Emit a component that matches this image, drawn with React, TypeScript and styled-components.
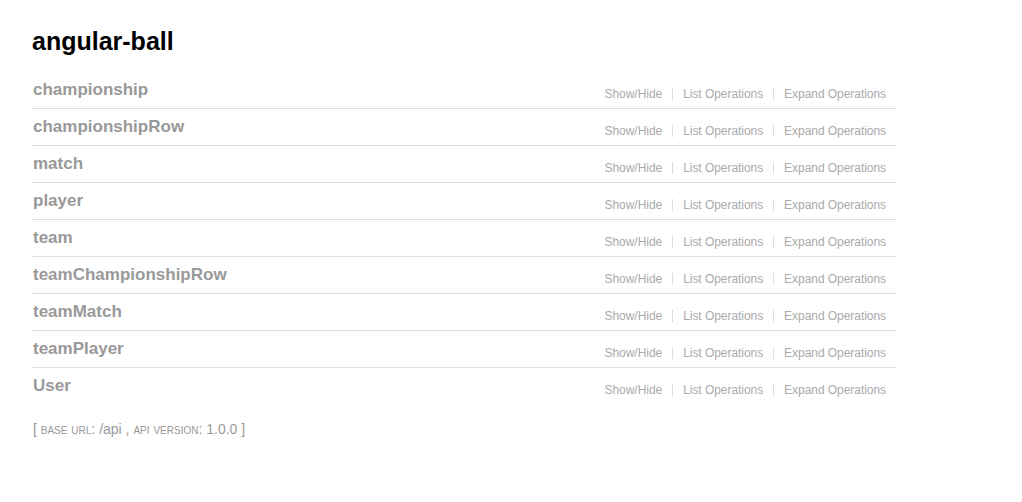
import React from "react";
import styled, { createGlobalStyle } from "styled-components";

const Global = createGlobalStyle`
  html, body { margin: 0; padding: 0; background: #fff; }
  body { font-family: "Liberation Sans", Arial, sans-serif; }
`;

const Container = styled.div`
  width: 864px;
  padding: 27px 32px 40px;
`;

const Title = styled.h1`
  margin: 0 0 16px;
  font-size: 25px;
  line-height: 29px;
  font-weight: bold;
  color: #000;
`;

const ResourceList = styled.ul`
  list-style: none;
  margin: 0;
  padding: 0;
`;

const Resource = styled.li<{ $last?: boolean }>`
  display: flex;
  justify-content: space-between;
  align-items: flex-start;
  height: 36px;
  border-bottom: ${(p) => (p.$last ? "none" : "1px solid #ddd")};
`;

const Heading = styled.h2`
  margin: 0;
  padding: 8px 0 0 1px;
  font-size: 17px;
  line-height: 20px;
  font-weight: bold;
  color: #999;
`;

const Options = styled.ul`
  list-style: none;
  display: flex;
  margin: 16px 0 0;
  padding: 0;
`;

const Option = styled.li<{ $last?: boolean }>`
  padding: 0 10px;
  font-size: 12px;
  line-height: 12px;
  height: 12px;
  letter-spacing: -0.05px;
  color: #aaa;
  border-right: ${(p) => (p.$last ? "none" : "1px solid #ddd")};
  cursor: pointer;
`;

const Footer = styled.h4`
  margin: 16px 0 0;
  padding-left: 1px;
  font-size: 14px;
  line-height: 18px;
  font-weight: normal;
  color: #999;
`;

const Label = styled.span`
  font-variant: small-caps;
`;

const resources = [
  "championship",
  "championshipRow",
  "match",
  "player",
  "team",
  "teamChampionshipRow",
  "teamMatch",
  "teamPlayer",
  "User",
];

export default function App() {
  return (
    <>
      <Global />
      <Container>
        <Title>angular-ball</Title>
        <ResourceList>
          {resources.map((r, i) => (
            <Resource key={r} $last={i === resources.length - 1}>
              <Heading>{r}</Heading>
              <Options>
                <Option>Show/Hide</Option>
                <Option>List Operations</Option>
                <Option $last>Expand Operations</Option>
              </Options>
            </Resource>
          ))}
        </ResourceList>
        <Footer>
          [ <Label>base url</Label>: /api , <Label>api version</Label>: 1.0.0 ]
        </Footer>
      </Container>
    </>
  );
}
